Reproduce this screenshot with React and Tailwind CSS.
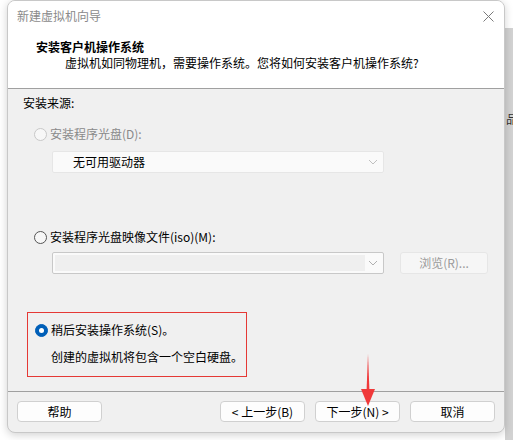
import React from "react";

const font = { fontFamily: '"Noto Sans CJK SC", "Microsoft YaHei", sans-serif' };

const Radio = ({ checked, disabled }) => (
  <span
    className={
      "inline-flex items-center justify-center w-[13px] h-[13px] rounded-full border " +
      (checked
        ? "border-[#005fb8] bg-[#005fb8]"
        : disabled
        ? "border-[#c8c8c8] bg-[#f7f7f7]"
        : "border-[#555] bg-[#f7f7f7]")
    }
  >
    {checked && <span className="w-[5px] h-[5px] rounded-full bg-white" />}
  </span>
);

const Chevron = ({ color }) => (
  <svg width="10" height="6" viewBox="0 0 10 6">
    <path d="M1 1 L5 5 L9 1" fill="none" stroke={color} strokeWidth="1" />
  </svg>
);

const Btn = ({ children, className = "" }) => (
  <button
    className={
      "h-[21px] w-[85px] rounded-[4px] border border-[#d0d0d0] bg-[#fdfdfd] text-[12px] text-black flex items-center justify-center " +
      className
    }
  >
    {children}
  </button>
);

export default function App() {
  return (
    <div className="relative w-[513px] h-[440px] bg-white overflow-hidden" style={font}>
      {/* window behind */}
      <div className="absolute left-[505px] top-[28px] w-[8px] h-[412px] bg-[#d2d2d2] overflow-hidden">
        <span className="absolute top-[83px] left-[1px] text-[12px] leading-[16px] text-[#333]">品</span>
      </div>

      <div className="absolute left-[7px] top-0 w-[498px] h-[433px] rounded-[8px] border border-[#c8c8c8] bg-[#f0f0f0] shadow-[0_2px_8px_rgba(0,0,0,0.18)] overflow-hidden flex flex-col">
        {/* title + header */}
        <div className="bg-white h-[88px] border-b border-[#a0a0a0] flex flex-col">
          <div className="h-[30px] flex items-center justify-between pl-[9px] pr-[10px]">
            <span className="text-[12px] text-[#8a8a8a]">新建虚拟机向导</span>
            <svg width="11" height="11" viewBox="0 0 11 11">
              <path d="M0.5 0.5 L10.5 10.5 M10.5 0.5 L0.5 10.5" stroke="#7a7a7a" strokeWidth="1" />
            </svg>
          </div>
          <div className="pl-[28px] pt-[8px] text-[12px] leading-[16px] font-bold text-black">
            安装客户机操作系统
          </div>
          <div className="pl-[57px] text-[12px] leading-[16px] text-black">
            虚拟机如同物理机，需要操作系统。您将如何安装客户机操作系统?
          </div>
        </div>

        {/* content */}
        <div className="flex-1 relative px-[15px] pt-[6px] border-b border-[#a0a0a0]">
          <div className="text-[12px] leading-[16px] text-black">安装来源:</div>

          <div className="mt-[15px] ml-[11px] flex items-center gap-[3px] text-[12px] leading-[16px] text-[#8a8a8a]">
            <Radio disabled />
            <span>安装程序光盘(D):</span>
          </div>
          <div className="mt-[9px] ml-[29px] w-[332px] h-[22px] bg-[#fafafa] border border-[#e6e6e6] rounded-[2px] flex items-center justify-between pl-[20px] pr-[5px]">
            <span className="text-[12px] text-black">无可用驱动器</span>
            <Chevron color="#c0c0c0" />
          </div>

          <div className="mt-[56px] ml-[11px] flex items-center gap-[3px] text-[12px] leading-[16px] text-black">
            <Radio />
            <span>安装程序光盘映像文件(iso)(M):</span>
          </div>
          <div className="mt-[7px] ml-[29px] flex items-center gap-[16px]">
            <div className="w-[332px] h-[22px] bg-[#fafafa] border border-[#c8c8c8] rounded-[2px] flex items-center justify-between pl-[2px] pr-[5px]">
              <div className="w-[310px] h-[16px] bg-[#efefef]" />
              <Chevron color="#b0b0b0" />
            </div>
            <div className="w-[88px] h-[22px] rounded-[3px] border border-[#e6e6e6] bg-[#f6f6f6] flex items-center justify-center text-[12px] text-[#9a9a9a]">
              浏览(R)...
            </div>
          </div>

          <div className="mt-[38px] ml-[4px] w-[220px] h-[65px] border border-[#e53935] pt-[9px] pl-[7px]">
            <div className="flex items-center gap-[3px] text-[12px] leading-[16px] text-black">
              <Radio checked />
              <span>稍后安装操作系统(S)。</span>
            </div>
            <div className="mt-[11px] pl-[16px] text-[12px] leading-[16px] text-black">
              创建的虚拟机将包含一个空白硬盘。
            </div>
          </div>
        </div>

        {/* footer */}
        <div className="h-[40px] flex items-center px-[9px] pb-[1px]">
          <Btn>帮助</Btn>
          <div className="flex-1" />
          <Btn>&lt; 上一步(B)</Btn>
          <Btn className="ml-[10px]">下一步(N) &gt;</Btn>
          <Btn className="ml-[10px]">取消</Btn>
        </div>
      </div>

      {/* red arrow annotation */}
      <svg className="absolute left-[358px] top-[352px]" width="20" height="56" viewBox="0 0 20 56">
        <path d="M10 2 L11.5 40 L8.5 40 Z" fill="#f0393a" />
        <path d="M3 37 L17 37 L10 54 Z" fill="#f0393a" />
      </svg>
    </div>
  );
}
